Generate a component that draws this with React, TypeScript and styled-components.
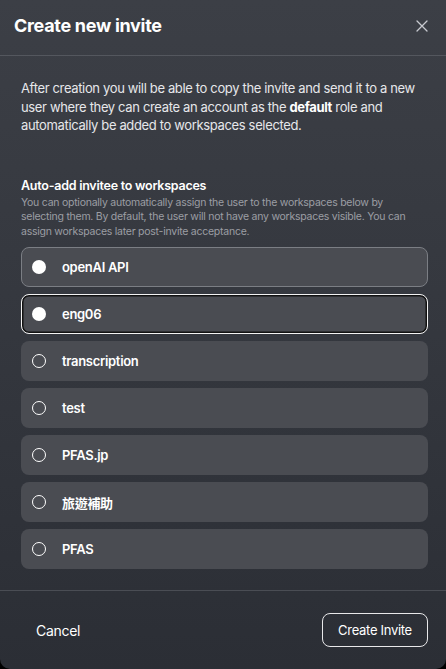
import styled, { createGlobalStyle, css } from 'styled-components';

const GlobalStyle = createGlobalStyle`
  html, body {
    margin: 0;
    padding: 0;
    background: #000;
  }
  body {
    font-family: Inter, "Noto Sans", "Noto Sans CJK TC", sans-serif;
    -webkit-font-smoothing: antialiased;
  }
`;

const Modal = styled.div`
  width: 446px;
  height: 669px;
  box-sizing: border-box;
  display: flex;
  flex-direction: column;
  border-radius: 0 0 10px 10px;
  background: linear-gradient(180deg, #3c3f46 0%, #34373e 50%, #2b2e35 100%);
  overflow: hidden;
`;

const Header = styled.header`
  height: 56px;
  box-sizing: border-box;
  display: flex;
  align-items: center;
  justify-content: space-between;
  padding: 0 18px 4px 14px;
  border-bottom: 1px solid #54575e;
`;

const Title = styled.h2`
  margin: 0;
  font-size: 18px;
  font-weight: 700;
  letter-spacing: -0.3px;
  color: #fff;
`;

const CloseButton = styled.button`
  background: none;
  border: none;
  padding: 0;
  display: flex;
  color: #c8cad0;
  cursor: pointer;
`;

const Body = styled.div`
  flex: 1;
  padding: 23px 18px 0 21px;
  display: flex;
  flex-direction: column;
`;

const Intro = styled.p`
  margin: 0;
  font-size: 13px;
  line-height: 18.5px;
  letter-spacing: -0.35px;
  color: #e6e7ea;

  b {
    font-weight: 700;
    color: #fff;
  }
`;

const SectionTitle = styled.h3`
  margin: 42px 0 0;
  font-size: 12.5px;
  line-height: 18px;
  font-weight: 600;
  letter-spacing: -0.25px;
  color: #fff;
`;

const SectionHint = styled.p`
  margin: 1px 0 0;
  font-size: 10.5px;
  line-height: 14.5px;
  letter-spacing: -0.25px;
  color: #9c9ea4;
`;

const List = styled.div`
  display: flex;
  flex-direction: column;
  gap: 7px;
  margin-top: 8px;
`;

const Item = styled.button<{ $checked?: boolean; $focused?: boolean }>`
  height: 40px;
  box-sizing: border-box;
  width: 100%;
  display: flex;
  align-items: center;
  gap: 16px;
  padding: 0 0 0 10px;
  border-radius: 8px;
  border: 1px solid transparent;
  background: #4a4c52;
  color: #fff;
  font-family: inherit;
  font-size: 13px;
  font-weight: 600;
  letter-spacing: -0.3px;
  text-align: left;
  cursor: pointer;

  ${({ $checked }) =>
    $checked &&
    css`
      border-color: #7b7e84;
    `}

  ${({ $focused }) =>
    $focused &&
    css`
      border: 1.5px solid #f2f2f2;
      box-shadow: inset 0 0 0 1.5px #111;
    `}
`;

const Radio = styled.span<{ $checked?: boolean }>`
  width: 14px;
  height: 14px;
  box-sizing: border-box;
  border-radius: 50%;
  flex-shrink: 0;
  ${({ $checked }) =>
    $checked
      ? css`
          background: #fff;
        `
      : css`
          border: 1.5px solid #fff;
        `}
`;

const Footer = styled.footer`
  height: 79px;
  box-sizing: border-box;
  display: flex;
  align-items: center;
  justify-content: space-between;
  padding: 0 18px 0 36px;
  border-top: 1px solid #4a4d54;
`;

const CancelButton = styled.button`
  background: none;
  border: none;
  padding: 0;
  font-family: inherit;
  font-size: 14px;
  letter-spacing: -0.3px;
  color: #fff;
  cursor: pointer;
`;

const PrimaryButton = styled.button`
  width: 106px;
  height: 34px;
  border-radius: 8px;
  border: 1px solid #e8e8ea;
  background: transparent;
  color: #fff;
  font-family: inherit;
  font-size: 13px;
  letter-spacing: -0.3px;
  cursor: pointer;
`;

const workspaces = [
  { name: 'openAI API', checked: true },
  { name: 'eng06', checked: true, focused: true },
  { name: 'transcription' },
  { name: 'test' },
  { name: 'PFAS.jp' },
  { name: '旅遊補助' },
  { name: 'PFAS' },
];

export default function App() {
  return (
    <>
      <GlobalStyle />
      <Modal>
        <Header>
          <Title>Create new invite</Title>
          <CloseButton aria-label="Close">
            <svg width="12" height="12" viewBox="0 0 12 12" fill="none" stroke="currentColor" strokeWidth="1.3" strokeLinecap="round">
              <path d="M1 1L11 11M11 1L1 11" />
            </svg>
          </CloseButton>
        </Header>
        <Body>
          <Intro>
            After creation you will be able to copy the invite and send it to a new user where they can
            create an account as the <b>default</b> role and automatically be added to workspaces selected.
          </Intro>
          <SectionTitle>Auto-add invitee to workspaces</SectionTitle>
          <SectionHint>
            You can optionally automatically assign the user to the workspaces below by selecting them. By
            default, the user will not have any workspaces visible. You can assign workspaces later
            post-invite acceptance.
          </SectionHint>
          <List>
            {workspaces.map((ws) => (
              <Item key={ws.name} $checked={ws.checked} $focused={ws.focused}>
                <Radio $checked={ws.checked} />
                {ws.name}
              </Item>
            ))}
          </List>
        </Body>
        <Footer>
          <CancelButton>Cancel</CancelButton>
          <PrimaryButton>Create Invite</PrimaryButton>
        </Footer>
      </Modal>
    </>
  );
}
